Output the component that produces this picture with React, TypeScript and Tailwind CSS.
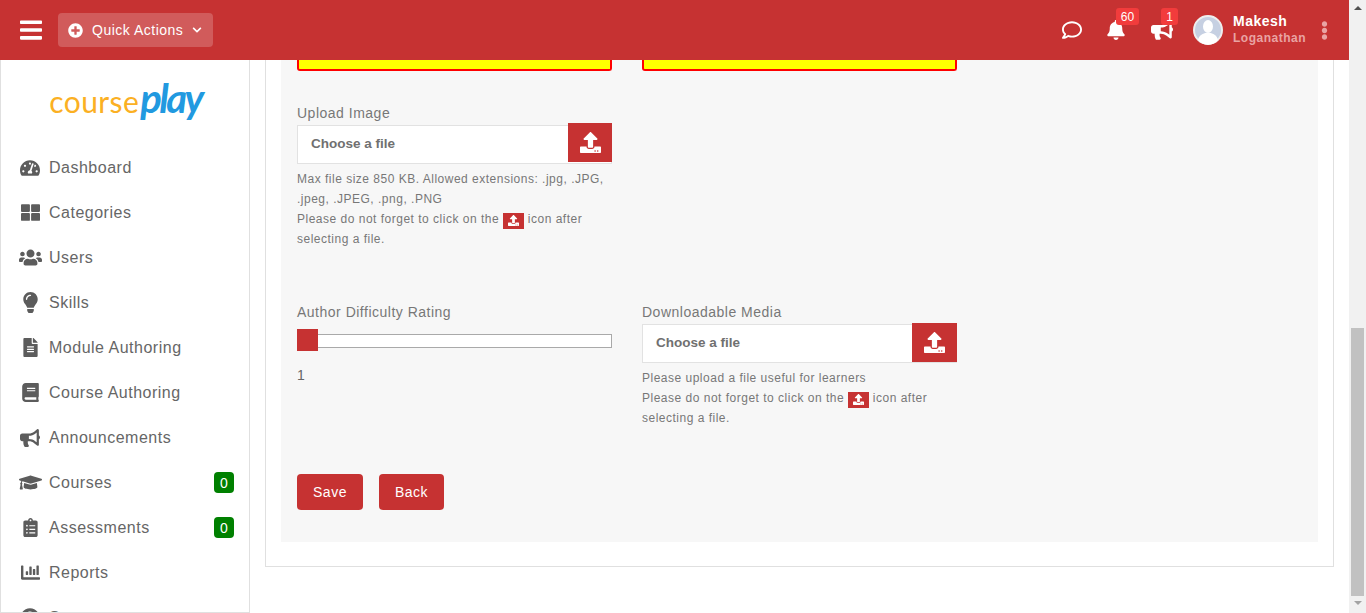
import React from "react";
import { IconType } from "react-icons";
import {
  FaBars,
  FaBell,
  FaBook,
  FaBullhorn,
  FaChartBar,
  FaChevronDown,
  FaClipboardList,
  FaEllipsisV,
  FaFileAlt,
  FaGraduationCap,
  FaLightbulb,
  FaPlusCircle,
  FaQuestionCircle,
  FaRegComment,
  FaTachometerAlt,
  FaThLarge,
  FaUpload,
  FaUsers,
} from "react-icons/fa";

const navItems: { label: string; icon: IconType; size: number; count?: number }[] = [
  { label: "Dashboard", icon: FaTachometerAlt, size: 20 },
  { label: "Categories", icon: FaThLarge, size: 19 },
  { label: "Users", icon: FaUsers, size: 23 },
  { label: "Skills", icon: FaLightbulb, size: 21 },
  { label: "Module Authoring", icon: FaFileAlt, size: 19 },
  { label: "Course Authoring", icon: FaBook, size: 19 },
  { label: "Announcements", icon: FaBullhorn, size: 20 },
  { label: "Courses", icon: FaGraduationCap, size: 23, count: 0 },
  { label: "Assessments", icon: FaClipboardList, size: 19, count: 0 },
  { label: "Reports", icon: FaChartBar, size: 19 },
  { label: "Support", icon: FaQuestionCircle, size: 20 },
];

const Header = () => (
  <header className="flex h-[60px] shrink-0 items-center justify-between bg-[#c63232] pl-5 pr-[15px] text-white">
    <div className="flex items-center">
      <FaBars className="h-[26px] w-[22px]" />
      <button className="ml-4 flex h-[34px] w-[155px] items-center rounded bg-white/20 pl-[10px] text-sm tracking-[0.5px]">
        <FaPlusCircle className="text-[15px]" />
        <span className="ml-[9px]">Quick Actions</span>
        <FaChevronDown className="ml-[9px] text-[10px]" />
      </button>
    </div>
    <div className="flex items-center">
      <FaRegComment className="text-[20px]" />
      <div className="relative ml-6">
        <FaBell className="text-[20px]" />
        <span className="absolute -top-3 left-[10px] flex h-[17px] w-[23px] items-center justify-center rounded-[3px] bg-[#f23c3c] text-xs">
          60
        </span>
      </div>
      <div className="relative ml-[25px]">
        <FaBullhorn className="text-[22px]" />
        <span className="absolute -top-[11px] left-[10px] flex h-[17px] w-[17px] items-center justify-center rounded-[3px] bg-[#f23c3c] text-xs">
          1
        </span>
      </div>
      <svg viewBox="0 0 30 30" className="ml-5 h-[30px] w-[30px]">
        <circle cx="15" cy="15" r="14" fill="#c6d0e2" stroke="#eeeeee" strokeWidth="2" />
        <ellipse cx="15" cy="11.5" rx="5" ry="6.5" fill="#ffffff" />
        <path d="M5 25c1-5 5-6 7-7h6c2 1 6 2 7 7a13 13 0 0 1-20 0z" fill="#ffffff" />
      </svg>
      <div className="ml-[10px] w-[82px]">
        <div className="text-sm font-bold leading-[17px] tracking-[0.5px]">Makesh</div>
        <div className="text-xs font-bold leading-[17px] tracking-[0.5px] text-[#e9a3a3]">Loganathan</div>
      </div>
      <FaEllipsisV className="text-[19px] text-[#e9a3a3]" />
    </div>
  </header>
);

const Sidebar = () => (
  <aside className="h-full w-[250px] shrink-0 overflow-hidden border-x border-b border-[#e0e0e0] bg-white">
    <div className="flex h-[85px] items-baseline justify-center pl-[1px] pt-[18px]">
      <span className="font-['Lato'] text-[30px] font-normal leading-[40px] tracking-[0.4px] text-[#fbb023]">course</span>
      <span className="ml-[1px] font-['Lato'] text-[40px] font-bold italic leading-[40px] tracking-[-2.5px] text-[#2199e0]">play</span>
    </div>
    {navItems.map(({ label, icon: Icon, size, count }) => (
      <div key={label} className="flex h-[45px] items-center pr-[15px] text-[#666666]">
        <div className="flex w-[48px] shrink-0 justify-center pl-[10px] text-[#5c5c5c]">
          <Icon style={{ fontSize: size }} />
        </div>
        <span className="flex-1 text-base tracking-[0.5px]">{label}</span>
        {count !== undefined && (
          <span className="flex h-[21px] w-5 items-center justify-center rounded bg-[#008000] text-sm text-white">
            {count}
          </span>
        )}
      </div>
    ))}
  </aside>
);

const InlineUpload = () => (
  <span className="inline-flex h-4 w-[21px] items-center justify-center bg-[#c63232] align-[-3px] text-white">
    <FaUpload className="text-[11px]" />
  </span>
);

const FileField = ({ buttonClass }: { buttonClass: string }) => (
  <div className="relative h-[41px] pt-[2px]">
    <div className="h-[39px] border border-[#e2e2e2] bg-white pl-[13px] text-[13.5px] font-bold leading-[35px] text-[#707070]">
      Choose a file
    </div>
    <button className={`absolute right-0 flex h-[39px] items-center justify-center bg-[#c63232] text-white ${buttonClass}`}>
      <FaUpload className="text-[21px]" />
    </button>
  </div>
);

const Label = ({ children }: { children: React.ReactNode }) => (
  <div className="text-sm leading-5 tracking-[0.5px] text-[#777777]">{children}</div>
);

const Help = ({ children }: { children: React.ReactNode }) => (
  <p className="mt-[5px] text-xs leading-5 tracking-[0.5px] text-[#777777]">{children}</p>
);

const Main = () => (
  <main className="h-full flex-1 overflow-hidden px-[15px]">
    <div className="border-x border-b border-[#e0e0e0] bg-white px-[15px] pb-6">
      <div className="bg-[#f7f7f7] px-4 pb-8">
        <div className="flex gap-[30px]">
          <div className="h-[11px] w-[315px] rounded-b-[3px] border-x-2 border-b-2 border-[#ff0000] bg-[#ffff00]" />
          <div className="h-[11px] w-[315px] rounded-b-[3px] border-x-2 border-b-2 border-[#ff0000] bg-[#ffff00]" />
        </div>

        <div className="mt-8 w-[315px]">
          <Label>Upload Image</Label>
          <FileField buttonClass="top-0 w-[44px]" />
          <Help>
            Max file size 850 KB. Allowed extensions: .jpg, .JPG, .jpeg, .JPEG, .png, .PNG
            <br />
            Please do not forget to click on the <InlineUpload /> icon after selecting a file.
          </Help>
        </div>

        <div className="mt-[53px] flex gap-[30px]">
          <div className="w-[315px]">
            <Label>Author Difficulty Rating</Label>
            <div className="relative mt-3 h-[14px] border border-[#a9a9a9] bg-white">
              <div className="absolute -left-[1px] -top-[6px] h-[22px] w-[21px] bg-[#c63232]" />
            </div>
            <div className="mt-[17px] text-sm leading-5 text-[#666666]">1</div>
          </div>
          <div className="w-[315px]">
            <Label>Downloadable Media</Label>
            <FileField buttonClass="top-[1px] w-[45px]" />
            <Help>
              Please upload a file useful for learners
              <br />
              Please do not forget to click on the <InlineUpload /> icon after selecting a file.
            </Help>
          </div>
        </div>

        <div className="mt-[46px] flex gap-4">
          <button className="h-9 w-[66px] rounded bg-[#c63232] text-sm tracking-[0.5px] text-white">Save</button>
          <button className="h-9 w-[65px] rounded bg-[#c63232] text-sm tracking-[0.5px] text-white">Back</button>
        </div>
      </div>
    </div>
  </main>
);

const Scrollbar = () => (
  <div className="flex h-full w-[17px] shrink-0 flex-col items-center bg-[#f1f1f1]">
    <div className="mt-[6px] h-0 w-0 border-x-[4px] border-b-[4px] border-x-transparent border-b-[#505050]" />
    <div className="mt-[318px] h-[268px] w-[13px] bg-[#c1c1c1]" />
    <div className="mt-[5px] h-0 w-0 border-x-[4px] border-t-[4px] border-x-transparent border-t-[#a3a3a3]" />
  </div>
);

const App: React.FC = () => {
  return (
    <div className="flex h-[613px] w-full overflow-hidden bg-white font-['Liberation_Sans',Arial,sans-serif]">
      <div className="flex h-full min-w-0 flex-1 flex-col">
        <Header />
        <div className="flex min-h-0 flex-1">
          <Sidebar />
          <Main />
        </div>
      </div>
      <Scrollbar />
    </div>
  );
};

export default App;
